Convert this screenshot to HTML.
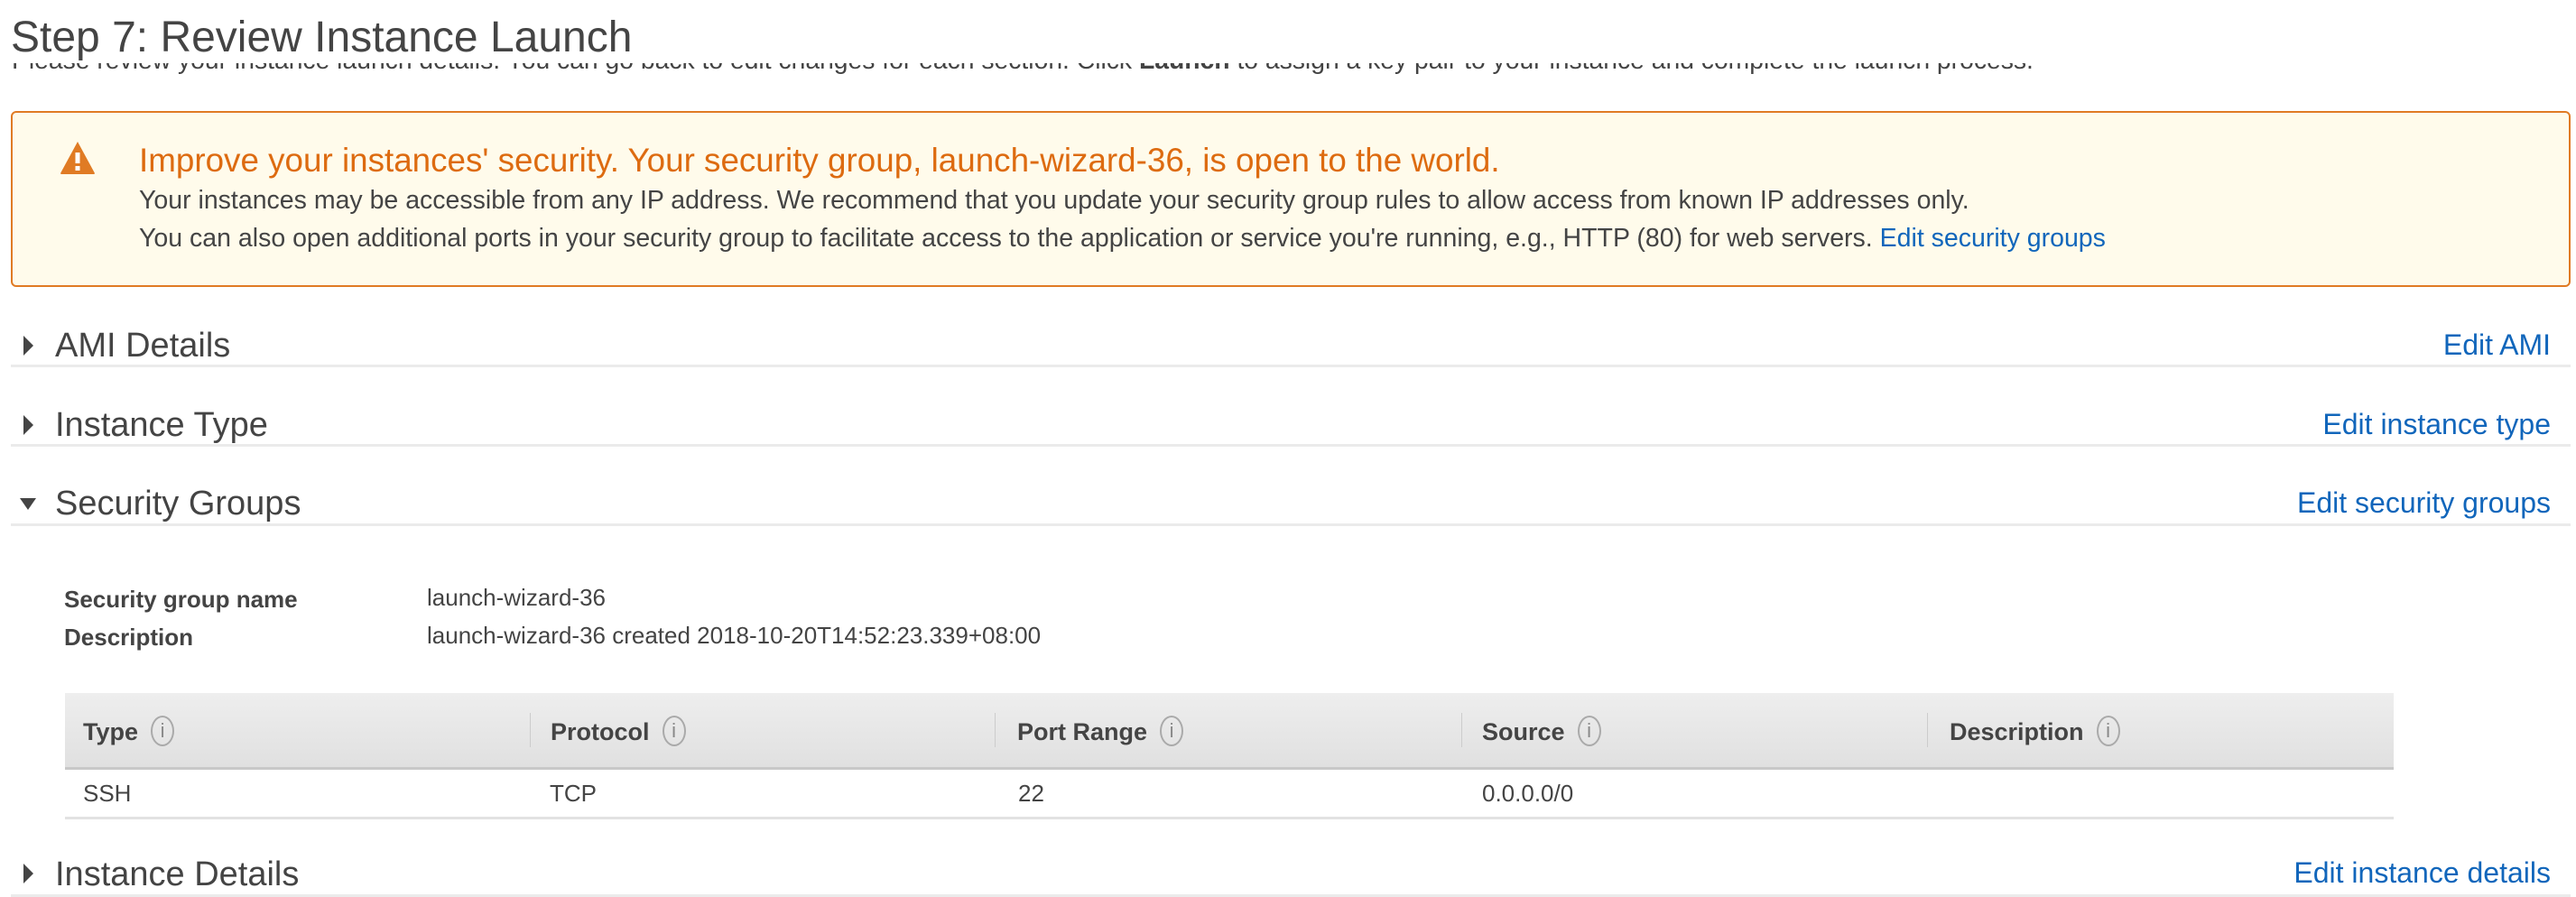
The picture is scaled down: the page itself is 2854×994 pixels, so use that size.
<!DOCTYPE html>
<html><head><meta charset="utf-8"><style>
body{margin:0;width:2854px;height:994px;background:#fff;font-family:"Liberation Sans",Arial,sans-serif;color:#444;position:relative;overflow:hidden}
.a{position:absolute;white-space:nowrap}
.sec{font-size:38px;color:#444}
.lnk{color:#1166bb;font-size:32px;right:28px}
.sep{position:absolute;left:12px;width:2836px;height:3px;background:#ebebeb}
.tri{position:absolute;width:0;height:0}
.info{display:inline-block;width:26px;height:34px;border:2px solid #aaa;border-radius:50%;vertical-align:middle;text-align:center;font-weight:normal;font-size:22px;line-height:30px;color:#888;margin-left:14px;box-sizing:border-box;margin-top:-6px}
.th{font-weight:bold;font-size:27px;color:#444}
.cs{position:absolute;top:790px;width:1px;height:38px;background:#ccc}
</style></head><body>
<div class="a" style="left:13px;top:50px;font-size:28.3px;line-height:32px">Please review your instance launch details. You can go back to edit changes for each section. Click <b>Launch</b> to assign a key pair to your instance and complete the launch process.</div>
<div class="a" style="left:0;top:0;width:2854px;height:70px;background:#fff"></div>
<div class="a" style="left:12px;top:16px;font-size:48px;line-height:52px;color:#444">Step 7: Review Instance Launch</div>

<div class="a" style="left:12px;top:123px;width:2832px;height:191px;border:2px solid #e07b24;border-radius:6px;background:#fffbeb"></div>
<svg class="a" style="left:66px;top:156px" width="40" height="38" viewBox="0 0 40 38"><path d="M20 1 L39 36 Q39 37 37 37 L3 37 Q1 37 1 36 Z" fill="#e07b24"/><rect x="17.5" y="13" width="5" height="12" fill="#fff"/><rect x="17.5" y="28" width="5" height="5" fill="#fff"/></svg>
<div class="a" style="left:154px;top:159px;font-size:36.8px;line-height:38px;color:#dd6b10">Improve your instances' security. Your security group, launch-wizard-36, is open to the world.</div>
<div class="a" style="left:154px;top:207px;font-size:28.5px;line-height:30px">Your instances may be accessible from any IP address. We recommend that you update your security group rules to allow access from known IP addresses only.</div>
<div class="a" style="left:154px;top:249px;font-size:28.5px;line-height:30px">You can also open additional ports in your security group to facilitate access to the application or service you're running, e.g., HTTP (80) for web servers. <span style="color:#1166bb">Edit security groups</span></div>

<div class="tri" style="left:26px;top:372px;border-left:11px solid #444;border-top:11px solid transparent;border-bottom:11px solid transparent"></div>
<div class="a sec" style="left:61px;top:363px;line-height:40px">AMI Details</div>
<div class="a lnk" style="top:364px;line-height:36px">Edit AMI</div>
<div class="sep" style="top:404px"></div>

<div class="tri" style="left:26px;top:460px;border-left:11px solid #444;border-top:11px solid transparent;border-bottom:11px solid transparent"></div>
<div class="a sec" style="left:61px;top:451px;line-height:40px">Instance Type</div>
<div class="a lnk" style="top:452px;line-height:36px">Edit instance type</div>
<div class="sep" style="top:492px"></div>

<div class="tri" style="left:22px;top:552px;border-top:13px solid #444;border-left:9px solid transparent;border-right:9px solid transparent"></div>
<div class="a sec" style="left:61px;top:538px;line-height:40px">Security Groups</div>
<div class="a lnk" style="top:539px;line-height:36px">Edit security groups</div>
<div class="sep" style="top:580px"></div>

<div class="a" style="left:71px;top:649px;font-size:26px;line-height:30px;font-weight:bold">Security group name</div>
<div class="a" style="left:473px;top:647px;font-size:26px;line-height:30px">launch-wizard-36</div>
<div class="a" style="left:71px;top:691px;font-size:26px;line-height:30px;font-weight:bold">Description</div>
<div class="a" style="left:473px;top:689px;font-size:26px;line-height:30px">launch-wizard-36 created 2018-10-20T14:52:23.339+08:00</div>

<div class="a" style="left:72px;top:768px;width:2580px;height:82px;background:linear-gradient(#eeeeee,#e0e0e0);border-bottom:3px solid #c8c8c8"></div>
<div class="cs" style="left:587px"></div><div class="cs" style="left:1102px"></div><div class="cs" style="left:1619px"></div><div class="cs" style="left:2135px"></div>
<div class="a th" style="left:92px;top:796px;line-height:30px">Type<span class="info">i</span></div>
<div class="a th" style="left:610px;top:796px;line-height:30px">Protocol<span class="info">i</span></div>
<div class="a th" style="left:1127px;top:796px;line-height:30px">Port Range<span class="info">i</span></div>
<div class="a th" style="left:1642px;top:796px;line-height:30px">Source<span class="info">i</span></div>
<div class="a th" style="left:2160px;top:796px;line-height:30px">Description<span class="info">i</span></div>
<div class="a" style="left:92px;top:864px;font-size:26px;line-height:30px">SSH</div>
<div class="a" style="left:609px;top:864px;font-size:26px;line-height:30px">TCP</div>
<div class="a" style="left:1128px;top:864px;font-size:26px;line-height:30px">22</div>
<div class="a" style="left:1642px;top:864px;font-size:26px;line-height:30px">0.0.0.0/0</div>
<div class="a" style="left:72px;top:905px;width:2580px;height:3px;background:#e2e2e2"></div>

<div class="tri" style="left:26px;top:957px;border-left:11px solid #444;border-top:11px solid transparent;border-bottom:11px solid transparent"></div>
<div class="a sec" style="left:61px;top:949px;line-height:40px">Instance Details</div>
<div class="a lnk" style="top:949px;line-height:36px">Edit instance details</div>
<div class="sep" style="top:991px"></div>
</body></html>
